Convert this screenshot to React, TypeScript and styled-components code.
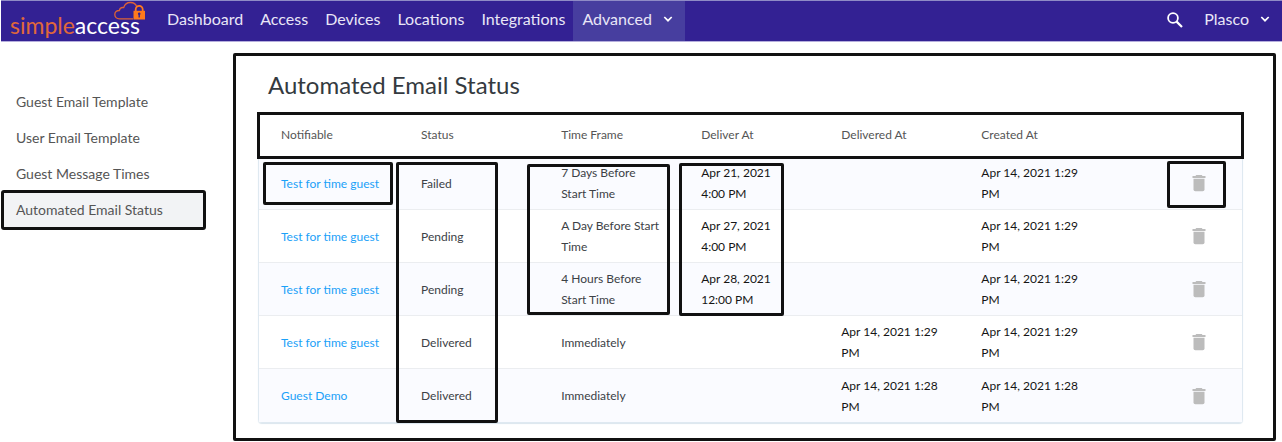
import React from "react";
import styled, { createGlobalStyle, css } from "styled-components";

const GlobalStyle = createGlobalStyle`
  *, *::before, *::after { box-sizing: border-box; }
  body {
    margin: 0;
    background: #fff;
    color: #343a40;
    font-family: Lato, "Noto Sans", sans-serif;
    font-size: 12px;
    line-height: 21px;
  }
  a { text-decoration: none; }
  button { font: inherit; border: 0; background: none; padding: 0; cursor: pointer; }
`;

const TopBar = styled.header`
  display: flex;
  align-items: stretch;
  height: 42px;
  margin-left: 1px;
  background: #332193;
  border-top: 1px solid #8f8bc6;
  border-bottom: 1px solid #b5aedd;
`;

const Brand = styled.a`
  position: relative;
  flex: none;
  width: 157px;
  padding-left: 9px;
  font-size: 23px;
  line-height: 48px;
  color: #e0683a;
`;

const BrandStrong = styled.span`
  color: #fff;
`;

const CloudMark = styled.svg`
  position: absolute;
  left: 112px;
  top: 0;
`;

const Nav = styled.nav`
  display: flex;
  flex: 1;
`;

const navItem = css`
  display: flex;
  align-items: center;
  color: #e9e6f7;
  font-size: 16px;
  line-height: 20px;
  padding: 0 8px 4px 9px;
  white-space: nowrap;
`;

const NavLink = styled.a`
  ${navItem}
`;

const NavMenu = styled.button<{ $active?: boolean }>`
  && {
    ${navItem}
    gap: 11px;
    padding-right: 12px;
    background: ${(p) => (p.$active ? "#473e9f" : "transparent")};
  }
`;

const IconButton = styled.button`
  display: flex;
  align-items: center;
  justify-content: center;
`;

const SearchButton = styled(IconButton)`
  width: 40px;
  padding-bottom: 2px;
`;

const Body = styled.div`
  display: flex;
  align-items: flex-start;
`;

const Sidebar = styled.aside`
  flex: none;
  width: 205px;
  margin: 42px 27px 0 1px;
  display: flex;
  flex-direction: column;
`;

const SideLink = styled.a<{ $active?: boolean }>`
  height: 36px;
  padding: 0 15px;
  font-size: 14px;
  line-height: 36px;
  color: #555;
  ${(p) =>
    p.$active &&
    css`
      margin: 0 2px;
      padding: 0 13px;
      background: #f2f3f5;
      outline: 3px solid #111;
      outline-offset: -1px;
      border-radius: 1px;
    `}
`;

const Panel = styled.main`
  flex: 1;
  min-width: 0;
  margin: 11px 6px 2px 0;
  padding: 14px 30px 15px 22px;
  border: 3px solid #111;
  border-radius: 2px;
`;

const Title = styled.h1`
  margin: 0 0 14px 10px;
  font-size: 24px;
  line-height: 30px;
  font-weight: 400;
  color: #343a40;
`;

const Table = styled.table`
  width: 100%;
  table-layout: fixed;
  border-collapse: separate;
  border-spacing: 0;
  border: 1px solid #dfe9f1;
  border-top: 0;
  border-radius: 4px;
  box-shadow: 0 1px 1px #dbe6ee;
`;

const HeadCell = styled.th`
  position: relative;
  height: 43px;
  padding: 0 18px 3px 22px;
  text-align: left;
  font-weight: 400;
  color: #555;
  &:not(:last-child) { width: 14.25%; }
`;

const HeadRow = styled.tr`
  outline: 3px solid #111;
  outline-offset: -1px;
`;

const Row = styled.tr`
  &:nth-child(odd) { background: #fafbff; }
  &:not(:last-child) td { border-bottom: 1px solid #ebedf0; }
`;

const Cell = styled.td<{ $dark?: boolean }>`
  position: relative;
  height: 53px;
  padding: 5px 18px 5px 22px;
  color: ${(p) => (p.$dark ? "#151515" : "#3c4146")};
`;

const ActionCell = styled(Cell)`
  padding-right: 36px;
`;

const GuestLink = styled.a`
  color: #1ba1f8;
`;

const DeleteButton = styled(IconButton)`
  margin-left: auto;
`;

const Callout = styled.span<{ $left: number; $top: number; $width: number; $height: number }>`
  position: absolute;
  z-index: 1;
  left: ${(p) => p.$left}px;
  top: ${(p) => p.$top}px;
  width: ${(p) => p.$width}px;
  height: ${(p) => p.$height}px;
  border: 3px solid #111;
  border-radius: 2px;
  pointer-events: none;
`;

const Chevron = () => (
  <svg width="10" height="8" viewBox="0 0 10 8" fill="none" stroke="#fff" strokeWidth="1.7" aria-hidden="true">
    <path d="M1.3 2 5 5.7 8.7 2" />
  </svg>
);

const SearchIcon = () => (
  <svg width="16" height="16" viewBox="0 0 16 16" fill="none" stroke="#fff" aria-hidden="true">
    <circle cx="6" cy="6" r="4.9" strokeWidth="1.8" />
    <path d="M9.6 9.6 15 15" strokeWidth="2.2" />
  </svg>
);

const TrashIcon = () => (
  <svg width="14" height="18" viewBox="0 0 14 18" fill="#bcbcbc" aria-hidden="true">
    <path d="M4.3 1h5.4l.9.9H13.5v2H.5v-2h2.9z" />
    <path d="M1.5 4.7h11v10.8a1.8 1.8 0 0 1-1.8 1.8H3.3a1.8 1.8 0 0 1-1.8-1.8z" />
  </svg>
);

const Cloud = () => (
  <CloudMark width="34" height="22" viewBox="0 0 34 22" fill="none" aria-hidden="true">
    <path
      d="M20 17.8H6.4C3.6 17.8 1.8 16 1.8 13.6c0-2.5 1.9-4.2 4.5-4.1C6.8 7.2 8.6 6.2 10.7 6.6 11.6 3.4 14.2 1.5 17.3 1.5c3.2 0 5.700 1.800 6.500 4.600"
      stroke="#dd6236"
      strokeWidth="1.3"
    />
    <path d="M22.7 10.5V8.4a3.5 3.5 0 0 1 7 0v2.1" stroke="#ff7a1c" strokeWidth="1.8" />
    <path d="M20.5 9.8h11.5v8.7H20.5z" fill="#ff7a1c" />
    <path d="M26.2 11.5a1.3 1.3 0 0 1 .7 2.4v2.6h-1.4v-2.6a1.3 1.3 0 0 1 .7-2.4z" fill="#332193" />
  </CloudMark>
);

type Box = [number, number, number, number];

interface EmailRow {
  guest: string;
  status: string;
  frame: string;
  deliver: string;
  delivered: string;
  created: string;
}

const columns = ["Notifiable", "Status", "Time Frame", "Deliver At", "Delivered At", "Created At", ""];

const rows: EmailRow[] = [
  { guest: "Test for time guest", status: "Failed", frame: "7 Days Before Start\u00a0Time", deliver: "Apr 21, 2021 4:00\u00a0PM", delivered: "", created: "Apr 14, 2021 1:29 PM" },
  { guest: "Test for time guest", status: "Pending", frame: "A Day Before Start Time", deliver: "Apr 27, 2021 4:00\u00a0PM", delivered: "", created: "Apr 14, 2021 1:29 PM" },
  { guest: "Test for time guest", status: "Pending", frame: "4 Hours Before Start\u00a0Time", deliver: "Apr 28, 2021 12:00\u00a0PM", delivered: "", created: "Apr 14, 2021 1:29 PM" },
  { guest: "Test for time guest", status: "Delivered", frame: "Immediately", deliver: "", delivered: "Apr 14, 2021 1:29 PM", created: "Apr 14, 2021 1:29 PM" },
  { guest: "Guest Demo", status: "Delivered", frame: "Immediately", deliver: "", delivered: "Apr 14, 2021 1:28 PM", created: "Apr 14, 2021 1:28 PM" },
];

// Callouts hang from the cells of the first row: left, top, width, height.
const callouts: Record<string, Box> = {
  guest: [4, 5, 130, 43],
  status: [-3, 5, 102, 261],
  frame: [-12, 7, 143, 151],
  deliver: [0, 6, 105, 153],
  action: [68, 4, 59, 47],
};

const Mark = ({ name, show }: { name: string; show: boolean }) => {
  if (!show) return null;
  const [left, top, width, height] = callouts[name];
  return <Callout $left={left} $top={top} $width={width} $height={height} />;
};

const sideLinks = ["Guest Email Template", "User Email Template", "Guest Message Times", "Automated Email Status"];

export default function App() {
  return (
    <>
      <GlobalStyle />
      <TopBar>
        <Brand href="#">
          simple<BrandStrong>access</BrandStrong>
          <Cloud />
        </Brand>
        <Nav>
          {["Dashboard", "Access", "Devices", "Locations", "Integrations"].map((n) => (
            <NavLink key={n} href="#">{n}</NavLink>
          ))}
          <NavMenu $active>Advanced <Chevron /></NavMenu>
        </Nav>
        <SearchButton aria-label="Search"><SearchIcon /></SearchButton>
        <NavMenu>Plasco <Chevron /></NavMenu>
      </TopBar>
      <Body>
        <Sidebar>
          {sideLinks.map((l, i) => (
            <SideLink key={l} href="#" $active={i === 3}>{l}</SideLink>
          ))}
        </Sidebar>
        <Panel>
          <Title>Automated Email Status</Title>
          <Table>
            <thead>
              <HeadRow>
                {columns.map((c, i) => <HeadCell key={i} scope="col">{c}</HeadCell>)}
              </HeadRow>
            </thead>
            <tbody>
              {rows.map((r, i) => (
                <Row key={i}>
                  <Cell><GuestLink href="#">{r.guest}</GuestLink><Mark name="guest" show={i === 0} /></Cell>
                  <Cell>{r.status}<Mark name="status" show={i === 0} /></Cell>
                  <Cell>{r.frame}<Mark name="frame" show={i === 0} /></Cell>
                  <Cell $dark>{r.deliver}<Mark name="deliver" show={i === 0} /></Cell>
                  <Cell $dark>{r.delivered}</Cell>
                  <Cell $dark>{r.created}</Cell>
                  <ActionCell>
                    <DeleteButton aria-label="Delete"><TrashIcon /></DeleteButton>
                    <Mark name="action" show={i === 0} />
                  </ActionCell>
                </Row>
              ))}
            </tbody>
          </Table>
        </Panel>
      </Body>
    </>
  );
}
